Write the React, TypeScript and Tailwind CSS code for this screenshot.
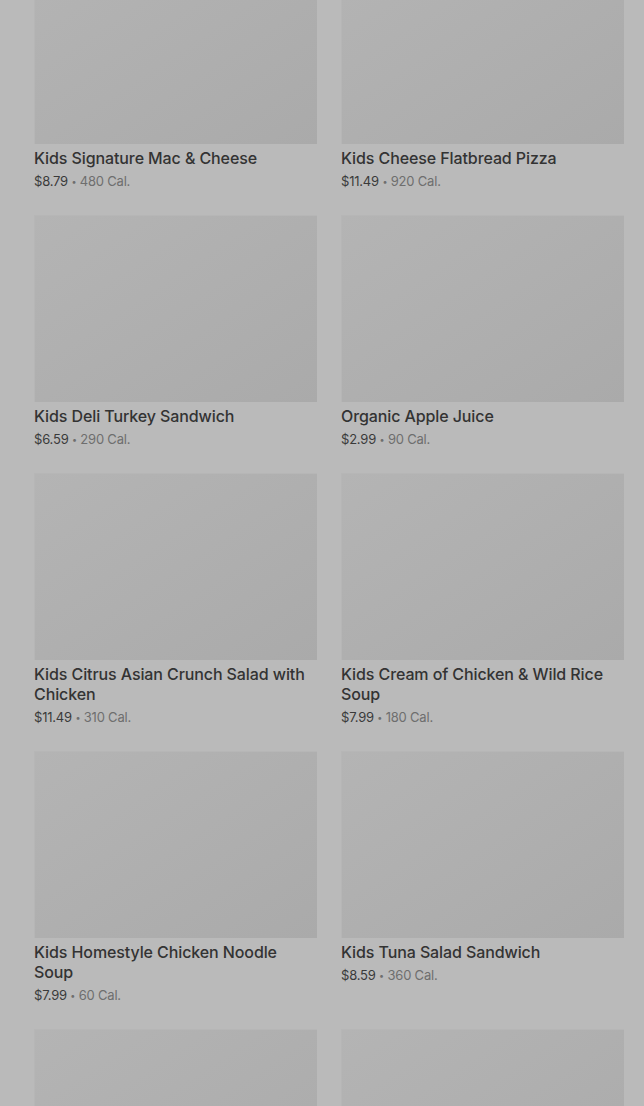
import React from "react";

type Item = { name: string; price: string; cal: string };

const items: Item[] = [
  { name: "Kids Signature Mac & Cheese", price: "$8.79", cal: "480 Cal." },
  { name: "Kids Cheese Flatbread Pizza", price: "$11.49", cal: "920 Cal." },
  { name: "Kids Deli Turkey Sandwich", price: "$6.59", cal: "290 Cal." },
  { name: "Organic Apple Juice", price: "$2.99", cal: "90 Cal." },
  { name: "Kids Citrus Asian Crunch Salad with Chicken", price: "$11.49", cal: "310 Cal." },
  { name: "Kids Cream of Chicken & Wild Rice Soup", price: "$7.99", cal: "180 Cal." },
  { name: "Kids Homestyle Chicken Noodle Soup", price: "$7.99", cal: "60 Cal." },
  { name: "Kids Tuna Salad Sandwich", price: "$8.59", cal: "360 Cal." },
  { name: "", price: "", cal: "" },
  { name: "", price: "", cal: "" },
];

function Card({ item }: { item: Item }) {
  return (
    <div className="flex flex-col">
      <div className="h-[187px] w-full bg-gradient-to-br from-[#b4b4b4] to-[#aaaaaa] border-t border-l border-[#b6b6b6]" />
      {item.name && (
        <div className="mt-[4px] flex flex-col">
          <div className="text-[16px] leading-[20px] font-medium text-[#333333] tracking-[-0.1px]">
            {item.name}
          </div>
          <div className="mt-[4px] text-[13px] leading-[18px] text-[#3a3a3a] tracking-[-0.2px]">
            {item.price}
            <span className="text-[#6e6e6e]">
              {" "}
              <span className="text-[9px] align-[1px]">•</span> {item.cal}
            </span>
          </div>
        </div>
      )}
    </div>
  );
}

export default function App() {
  return (
    <div
      className="w-[644px] h-[1106px] overflow-hidden bg-[#bababa]"
      style={{ fontFamily: "Inter, 'Noto Sans', Arial, sans-serif" }}
    >
      <div className="mt-[-43px] pl-[34px] pr-[20px] grid grid-cols-2 gap-x-[24px] gap-y-[24px]">
        {items.map((it, i) => (
          <Card key={i} item={it} />
        ))}
      </div>
    </div>
  );
}
